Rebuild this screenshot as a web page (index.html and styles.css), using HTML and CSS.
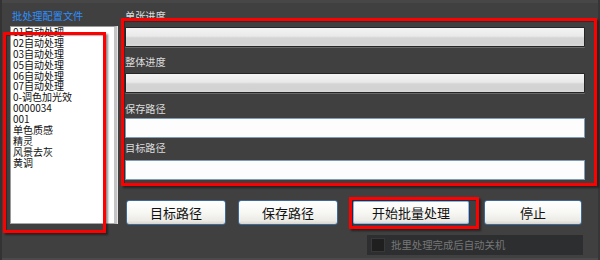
FILE: index.html
```html
<!DOCTYPE html>
<html lang="zh-CN">
<head>
<meta charset="utf-8">
<title>批处理</title>
<link rel="stylesheet" href="styles.css">
</head>
<body>
<div class="app">
  <div class="left">
    <div class="title">批处理配置文件</div>
    <ul class="list">
      <li>01自动处理</li>
      <li>02自动处理</li>
      <li>03自动处理</li>
      <li>05自动处理</li>
      <li>06自动处理</li>
      <li>07自动处理</li>
      <li>0-调色加光效</li>
      <li>0000034</li>
      <li>001</li>
      <li>单色质感</li>
      <li>精灵</li>
      <li>风景去灰</li>
      <li>黄调</li>
    </ul>
  </div>
  <div class="right">
    <div class="label l1">单张进度</div>
    <div class="bar"></div>
    <div class="label l2">整体进度</div>
    <div class="bar"></div>
    <div class="label l3">保存路径</div>
    <div class="input i1"></div>
    <div class="label l4">目标路径</div>
    <div class="input i2"></div>
    <div class="buttons">
      <button class="btn b1">目标路径</button>
      <button class="btn b2">保存路径</button>
      <button class="btn b3 focus">开始批量处理</button>
      <button class="btn b4">停止</button>
    </div>
    <div class="checkrow">
      <span class="check"></span>
      <span class="checktext">批里处理完成后自动关机</span>
    </div>
  </div>
</div>
<div class="mark mark-list"></div>
<div class="mark mark-panel"></div>
<div class="mark mark-btn"></div>
</body>
</html>
```

FILE: styles.css
```css
html, body {
  margin: 0;
  padding: 0;
}
body {
  width: 600px;
  height: 260px;
  overflow: hidden;
  position: relative;
  background: #404040;
  font-family: "Noto Sans CJK SC", "Noto Sans", sans-serif;
  box-shadow: inset 2px 0 0 #333333, inset -2px 0 0 #363636, inset 0 -2px 0 #4a4a4a, inset 0 3px 0 #474747;
}
.app {
  display: flex;
  height: 260px;
  padding-left: 10px;
  box-sizing: border-box;
}
.left {
  width: 107px;
  flex: none;
}
.title {
  margin-top: 10px;
  padding-left: 2px;
  height: 12px;
  line-height: 12px;
  font-size: 10.2px;
  color: #2b8fff;
  white-space: nowrap;
}
.list {
  margin: 4px 0 0 0;
  padding: 0 0 0 2px;
  list-style: none;
  height: 198px;
  box-sizing: border-box;
  background: #ffffff;
  border-left: 1px solid #9a9a9a;
  border-top: 1px solid #9a9a9a;
  border-bottom: 1px solid #a8a8a8;
  border-right: 3px solid #c4c4c4;
  box-shadow: 1px 0 0 #e6e6e6;
}
.list li {
  font-size: 10px;
  line-height: 10.9px;
  height: 10.9px;
  color: #111111;
  white-space: nowrap;
}
.right {
  margin-left: 8px;
  width: 460px;
  flex: none;
}
.label {
  font-size: 10.2px;
  line-height: 12px;
  height: 12px;
  color: #dcdcdc;
  white-space: nowrap;
}
.l1 { margin-top: 10px; }
.l2 { margin-top: 9px; }
.l3 { margin-top: 10px; }
.l4 { margin-top: 4px; }
.bar {
  margin-top: 5px;
  height: 20px;
  box-sizing: border-box;
  border: 1px solid #262626;
  border-radius: 1px;
  background: linear-gradient(#f4f4f4 0%, #e9e9e9 45%, #d5d5d5 55%, #d2d2d2 85%, #dadada 100%);
  box-shadow: 0 1px 0 #6a6a6a;
}
.input {
  height: 20px;
  box-sizing: border-box;
  border: 1px solid #7f9db9;
  background: #fdfdfd;
}
.i1 { margin-top: 3px; }
.i2 { margin-top: 6px; }
.buttons {
  display: flex;
  margin-top: 20px;
  padding-left: 1px;
}
.btn {
  height: 25px;
  padding: 0;
  box-sizing: border-box;
  border: 1px solid #3d6a98;
  border-radius: 3px;
  background: linear-gradient(#ffffff 0%, #f7f7f4 50%, #ecebe6 85%, #d6d5ce 100%);
  font-family: "Noto Sans CJK SC", "Noto Sans", sans-serif;
  font-size: 13px;
  line-height: 22px;
  color: #111111;
  text-align: center;
}
.b1 { width: 100px; }
.b2 { width: 100px; margin-left: 12px; }
.b3 { width: 118px; margin-left: 14px; }
.b4 { width: 98px; margin-left: 14px; }
.focus {
  border-color: #243f66;
  box-shadow: inset 0 0 0 1px #98b6dc;
}
.checkrow {
  display: flex;
  align-items: center;
  margin-top: 10px;
  margin-left: 242px;
  width: 216px;
  height: 20px;
  background: #2c2e30;
}
.check {
  width: 14px;
  height: 14px;
  box-sizing: border-box;
  margin-left: 4px;
  background: #1f1f1f;
  border: 1px solid #383838;
}
.checktext {
  margin-left: 6px;
  font-size: 10.4px;
  line-height: 12px;
  color: #777777;
  white-space: nowrap;
}
.mark {
  position: absolute;
  border: 3px solid #ff0000;
  box-sizing: border-box;
  box-shadow: 2px 2px 2px rgba(0, 0, 0, 0.45), inset 1px 1px 1px rgba(0, 0, 0, 0.3);
}
.mark-list {
  left: 3px;
  top: 32px;
  width: 103px;
  height: 201px;
}
.mark-panel {
  left: 121px;
  top: 18px;
  width: 476px;
  height: 168px;
}
.mark-btn {
  left: 349px;
  top: 197px;
  width: 130px;
  height: 32px;
}
```
